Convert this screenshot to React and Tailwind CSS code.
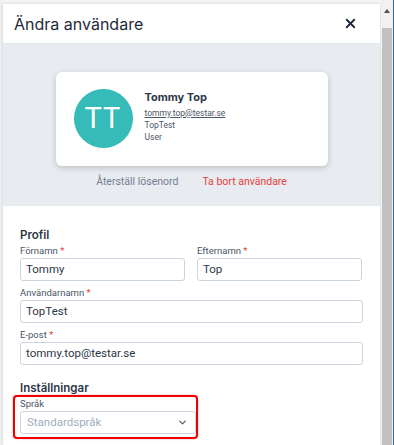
import { X, ChevronDown } from 'lucide-react'

const Label = ({ text, required }) => (
  <div className='text-[9.5px] leading-[12px] text-[#4a5568] mb-px'>
    {text}
    {required && <span className='text-[#e53e3e]'> *</span>}
  </div>
)

const Field = ({ value, className = '' }) => (
  <div className={`h-[23px] border border-[#cbd5e0] rounded-[3px] bg-white flex items-center px-[5px] text-[11.5px] text-[#2d3748] ${className}`}>
    {value}
  </div>
)

function App() {
  return (
    <div className='w-[394px] h-[445px] overflow-hidden flex bg-[#f3f4f6] font-["Roboto",sans-serif]'>
      <div className='w-[3px] bg-[#eef0f2] shrink-0' />

      {/* modal */}
      <div className='w-[377px] shrink-0 mt-[4px] bg-white flex flex-col shadow-[0_0_3px_rgba(0,0,0,0.15)]'>
        <div className='h-[40px] flex items-center justify-between pl-[11px] pr-[22px] border-b border-[#e2e8f0]'>
          <h1 className='font-["Inter",sans-serif] text-[16px] text-[#1e2a3b]'>Ändra användare</h1>
          <X size={15} strokeWidth={3} className='text-[#1e2a3b]' />
        </div>

        <div className='bg-[#e8ebef] flex flex-col items-center pt-[28px] pb-[17px]'>
          <div className='w-[272px] h-[94px] bg-white rounded-[6px] shadow-[0_2px_6px_rgba(0,0,0,0.18)] flex items-start pl-[18px] pt-[17px] gap-[12px]'>
            <div className='w-[59px] h-[59px] rounded-full bg-[#35bbb8] flex items-center justify-center text-white text-[29px] tracking-[1px]'>
              TT
            </div>
            <div className='flex flex-col pt-[1px]'>
              <div className='font-["Inter",sans-serif] font-bold text-[11px] leading-[14px] text-[#2d3748]'>Tommy Top</div>
              <div className='mt-[3px] text-[8.5px] leading-[12px] text-[#4a5568] underline'>tommy.top@testar.se</div>
              <div className='text-[8.5px] leading-[12px] text-[#4a5568]'>TopTest</div>
              <div className='text-[8.5px] leading-[12px] text-[#4a5568]'>User</div>
            </div>
          </div>
          <div className='flex gap-[24px] mt-[9px] text-[10.5px] leading-[14px]'>
            <span className='text-[#718096]'>Återställ lösenord</span>
            <span className='text-[#e53e3e]'>Ta bort användare</span>
          </div>
        </div>

        <div className='px-[17px] pt-[22px] flex flex-col'>
          <h2 className='font-["Inter",sans-serif] font-semibold text-[11.5px] leading-[14px] text-[#2d3748] mb-[3px]'>Profil</h2>
          <div className='flex gap-[12px]'>
            <div className='w-[165px]'>
              <Label text='Förnamn' required />
              <Field value='Tommy' />
            </div>
            <div className='w-[165px]'>
              <Label text='Efternamn' required />
              <Field value='Top' />
            </div>
          </div>
          <div className='mt-[6px]'>
            <Label text='Användarnamn' required />
            <Field value='TopTest' />
          </div>
          <div className='mt-[6px]'>
            <Label text='E-post' required />
            <Field value='tommy.top@testar.se' />
          </div>

          <h2 className='mt-[16px] font-["Inter",sans-serif] font-semibold text-[11.5px] leading-[14px] text-[#2d3748] mb-[3px]'>Inställningar</h2>
          <div className='relative w-[176px]'>
            <Label text='Språk' />
            <div className='h-[23px] border border-[#cbd5e0] rounded-[3px] bg-white flex items-center justify-between pl-[6px] pr-[7px] text-[11.5px] text-[#a0aec0]'>
              Standardspråk
              <ChevronDown size={11} strokeWidth={2.5} className='text-[#4a5568]' />
            </div>
            <div className='absolute left-[-7px] top-[-3px] right-[-2px] bottom-[-5px] border-[2.5px] border-[#ee0000] rounded-[4px] shadow-[0_0_2px_rgba(238,0,0,0.4)]' />
          </div>
        </div>
      </div>

      {/* scrollbar */}
      <div className='w-[12px] shrink-0 flex flex-col bg-[#f1f1f1] ml-[1px]'>
        <div className='h-[28px] flex items-start justify-center pt-[9px]'>
          <div className='w-0 h-0 border-l-[3px] border-r-[3px] border-b-[4px] border-l-transparent border-r-transparent border-b-[#505050]' />
        </div>
        <div className='flex-1 mx-[1px] bg-[#c1c1c1]' />
      </div>
      <div className='w-[1px] bg-[#2b6cb0] shrink-0' />
    </div>
  )
}

export default App
